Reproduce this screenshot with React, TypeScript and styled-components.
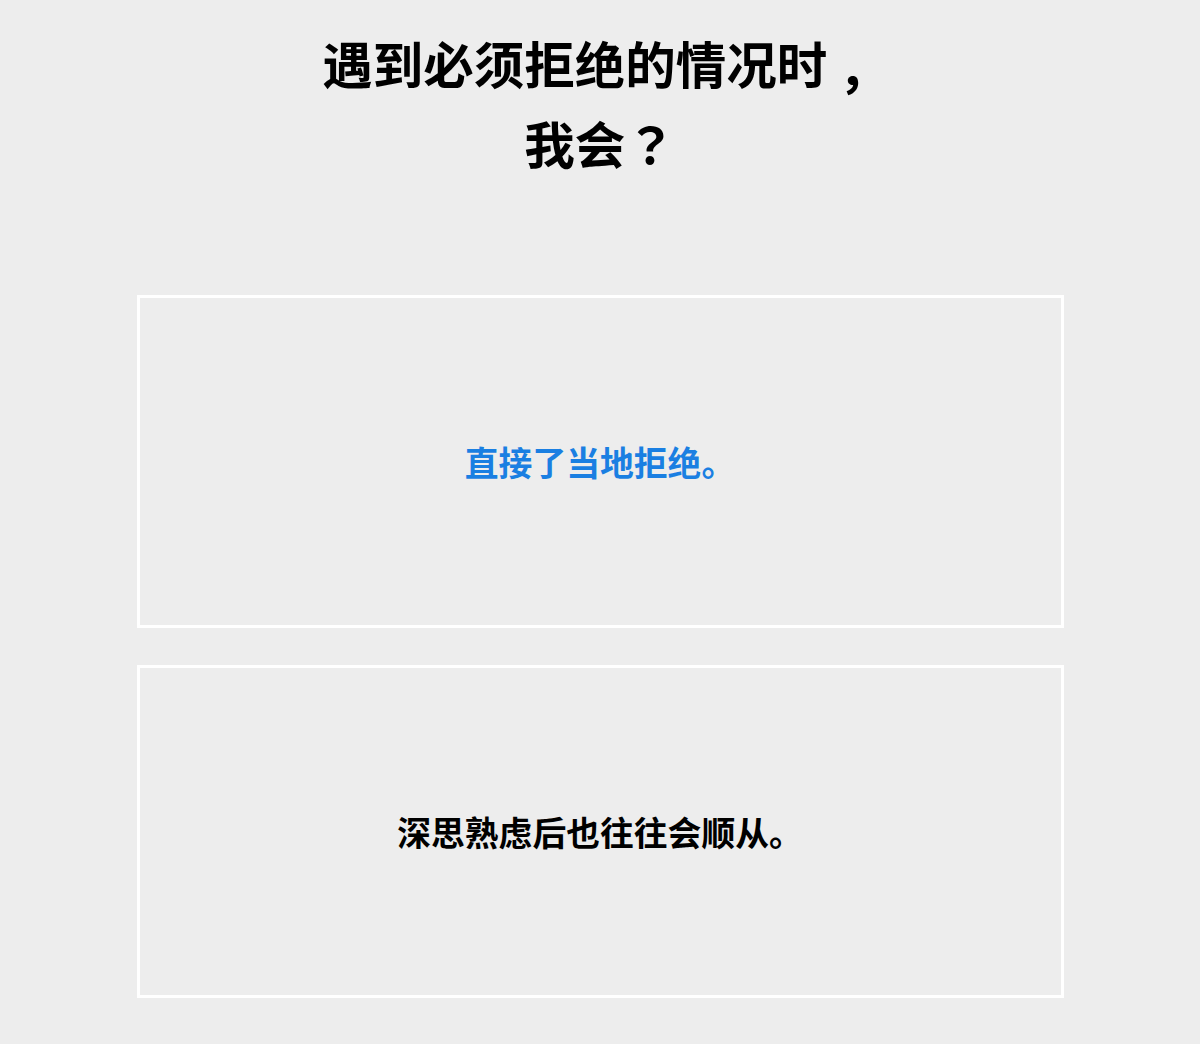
import styled, { createGlobalStyle } from "styled-components";

const GlobalStyle = createGlobalStyle`
  html, body {
    margin: 0;
    padding: 0;
    background-color: #ededed;
  }

  body {
    font-family: "Noto Sans CJK SC", "Noto Sans", sans-serif;
  }
`;

type Choice = {
  id: number;
  text: string;
  selected?: boolean;
};

const choices: Choice[] = [
  { id: 1, text: "直接了当地拒绝。", selected: true },
  { id: 2, text: "深思熟虑后也往往会顺从。" },
];

export default function App() {
  return (
    <>
      <GlobalStyle />
      <Page>
        <Question>
          遇到必须拒绝的情况时<Punct $baseline>，</Punct>
          <br />
          我会<Punct>？</Punct>
        </Question>

        <Options>
          {choices.map((c) => (
            <Option key={c.id} type="button">
              <OptionText $selected={c.selected}>{c.text}</OptionText>
            </Option>
          ))}
        </Options>
      </Page>
    </>
  );
}

const Page = styled.div`
  min-height: 100vh;
  padding: 22px 0 0;
  box-sizing: border-box;

  display: flex;
  flex-direction: column;
  align-items: center;
`;

const Question = styled.h1`
  margin: 0;
  font-size: 50.5px;
  font-weight: 700;
  line-height: 80px;
  text-align: center;
  color: #000;
`;

// full-width punctuation centred in its cell; the comma sits on the baseline
const Punct = styled.span<{ $baseline?: boolean }>`
  font-family: "Noto Sans CJK TC", sans-serif;
  position: relative;
  top: ${({ $baseline }) => ($baseline ? "19px" : "0")};
`;

const Options = styled.div`
  margin-top: 113px;
  width: 927px;

  display: flex;
  flex-direction: column;
  gap: 37px;
`;

const Option = styled.button`
  height: 333px;
  border: 3px solid #ffffff;
  background: transparent;
  box-sizing: border-box;
  cursor: pointer;
  padding: 0;

  display: flex;
  align-items: center;
  justify-content: center;
  font-family: inherit;
`;

const OptionText = styled.span<{ $selected?: boolean }>`
  font-size: 33.8px;
  font-weight: 700;
  color: ${({ $selected }) => ($selected ? "#1a7fe2" : "#000")};
`;
